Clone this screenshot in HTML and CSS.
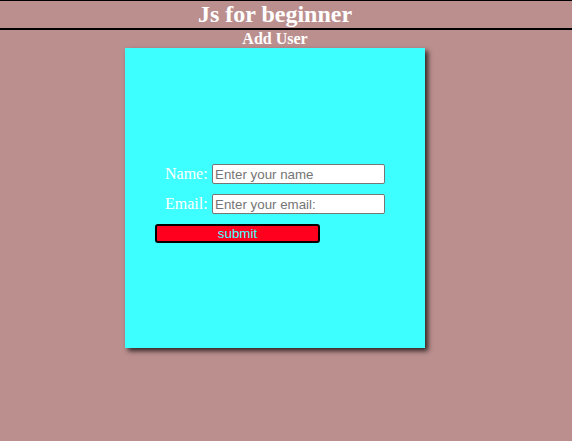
FILE: index.html
```html
<!DOCTYPE html>
<html>
<head>
<meta charset="utf-8">
<link rel="stylesheet" href="styles.css">
</head>
<body>
<header class="topbar">
  <h1 class="title">Js for beginner</h1>
</header>
<main class="page">
  <h3 class="subtitle">Add User</h3>
  <div class="card">
    <form class="user-form">
      <div class="row">
        <label class="label" for="name">Name:</label>
        <input class="field" id="name" type="text" placeholder="Enter your name">
      </div>
      <div class="row">
        <label class="label" for="email">Email:</label>
        <input class="field" id="email" type="text" placeholder="Enter your email:">
      </div>
      <button class="submit" type="button">submit</button>
    </form>
  </div>
</main>
</body>
</html>
```
FILE: styles.css
```css
html, body {
  margin: 0;
  padding: 0;
}
body {
  background: #bc8f8f;
  font-family: "Liberation Serif", "Times New Roman", serif;
  color: #fff;
  height: 441px;
}
.topbar {
  border-top: 1px solid #000;
  border-bottom: 2px solid #000;
  width: 100%;
}
.title {
  margin: 0;
  width: 550px;
  text-align: center;
  font-size: 24px;
  line-height: 27px;
  font-weight: bold;
  color: #fff;
}
.page {
  width: 550px;
  display: flex;
  flex-direction: column;
  align-items: center;
}
.subtitle {
  margin: 0;
  font-size: 16px;
  line-height: 18px;
  font-weight: bold;
  text-align: center;
}
.card {
  width: 300px;
  height: 300px;
  background: #3dffff;
  box-shadow: 3px 3px 5px rgba(0, 0, 0, 0.75);
  box-sizing: border-box;
  padding: 116px 0 0 30px;
}
.user-form {
  display: flex;
  flex-direction: column;
  align-items: flex-start;
}
.row {
  display: flex;
  align-items: center;
  gap: 4px;
  padding-left: 10px;
  height: 20px;
  margin-bottom: 10px;
}
.label {
  font-size: 16px;
  color: #fff;
  width: 43px;
}
.field {
  width: 173px;
  height: 20px;
  box-sizing: border-box;
  margin: 0;
  padding: 1px 2px;
  border: 1px solid #767676;
  border-radius: 2px;
  font-family: "Liberation Sans", Arial, sans-serif;
  font-size: 13.33px;
  background: #fff;
}
.field::placeholder {
  color: #757575;
}
.submit {
  width: 165px;
  height: 19px;
  box-sizing: border-box;
  margin: 0;
  padding: 0;
  background: #ff001f;
  border: 2px solid #000;
  border-radius: 3px;
  color: #3dffff;
  font-family: "Liberation Sans", Arial, sans-serif;
  font-size: 13.33px;
  line-height: 15px;
}
```
